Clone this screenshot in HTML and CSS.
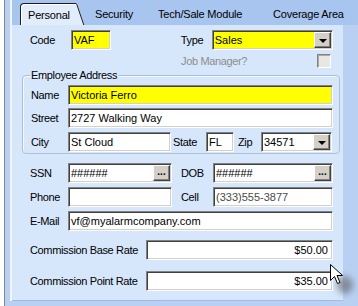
FILE: index.html
```html
<!DOCTYPE html>
<html lang="en">

<head>
    <meta charset="UTF-8">
    <title>Employee - Personal</title>
    <link rel="stylesheet" href="styles.css">
</head>

<body>
    <div class="window">
        <div class="tabctl">
            <div class="tabbar">
                <div class="tab active">Personal</div>
                <svg class="tab-edge" width="9" height="22" viewBox="0 0 9 22">
                    <polygon points="0,0 1,0 8,22 0,22" fill="#e2edfc"/>
                    <line x1="0.5" y1="0.5" x2="7.8" y2="22" stroke="#1c1c1c" stroke-width="1"/>
                </svg>
                <div class="tab security">Security</div>
                <div class="tab tech">Tech/Sale Module</div>
                <div class="tab">Coverage Area</div>
            </div>

            <div class="page">
                <div class="row">
                    <span class="lbl w-code">Code</span>
                    <span class="field yellow w-codebox">VAF</span>
                    <span class="lbl w-type">Type</span>
                    <span class="field yellow combo w-typebox">
                        <span class="value">Sales</span>
                        <span class="btn drop"><span class="arrow"></span></span>
                    </span>
                </div>

                <div class="row job">
                    <span class="lbl disabled">Job Manager?</span>
                    <span class="check"></span>
                </div>

                <fieldset class="group">
                    <legend>Employee Address</legend>
                    <div class="row first">
                        <span class="lbl w-addr">Name</span>
                        <span class="field yellow grow">Victoria Ferro</span>
                    </div>
                    <div class="row street">
                        <span class="lbl w-addr">Street</span>
                        <span class="field grow">2727 Walking Way</span>
                    </div>
                    <div class="row city">
                        <span class="lbl w-addr">City</span>
                        <span class="field w-city">St Cloud</span>
                        <span class="lbl w-state">State</span>
                        <span class="field w-statebox">FL</span>
                        <span class="lbl w-zip">Zip</span>
                        <span class="field combo w-zipbox">
                            <span class="value">34571</span>
                            <span class="btn drop"><span class="arrow"></span></span>
                        </span>
                    </div>
                </fieldset>

                <div class="row ssn">
                    <span class="lbl w-main">SSN</span>
                    <span class="field combo w-ssn">
                        <span class="value">######</span>
                        <span class="btn dots">...</span>
                    </span>
                    <span class="lbl w-side">DOB</span>
                    <span class="field combo grow">
                        <span class="value">######</span>
                        <span class="btn dots">...</span>
                    </span>
                </div>

                <div class="row gap4">
                    <span class="lbl w-main">Phone</span>
                    <span class="field w-ssn"></span>
                    <span class="lbl w-side">Cell</span>
                    <span class="field grow masked">(333)555-3877</span>
                </div>

                <div class="row gap4">
                    <span class="lbl w-main">E-Mail</span>
                    <span class="field grow">vf@myalarmcompany.com</span>
                </div>

                <div class="row rate-base">
                    <span class="lbl w-rate">Commission Base Rate</span>
                    <span class="field grow money">$50.00</span>
                </div>

                <div class="row rate-point">
                    <span class="lbl w-rate">Commission Point Rate</span>
                    <span class="field grow money">$35.00</span>
                </div>
            </div>
        </div>
    </div>

    <!-- mouse pointer with its drop shadow -->
    <div class="cursor">
        <svg width="30" height="36" viewBox="0 0 30 36">
            <defs>
                <filter id="blur" x="-50%" y="-50%" width="200%" height="200%">
                    <feGaussianBlur stdDeviation="3"/>
                </filter>
            </defs>
            <ellipse cx="16" cy="22" rx="8" ry="9" fill="#555" opacity="0.55" filter="url(#blur)"/>
            <path d="M1.5 1.5 L1.5 17.5 L5.5 13.5 L8.5 20.5 L11 19.5 L8 12.5 L13.5 12.5 Z"
                  fill="#fff" stroke="#000" stroke-width="1" stroke-linejoin="miter"/>
        </svg>
    </div>
</body>

</html>
```

FILE: styles.css
```css
body {
    margin: 0;
    width: 358px;
    height: 306px;
    overflow: hidden;
    background: #ffffff;
    font-family: "Liberation Sans", Arial, sans-serif;
    font-size: 11px;
    color: #000;
}

.window {
    margin-left: 4px;
    height: 306px;
    border-left: 1px solid #7d8796;
    background: #b9d0f2;
    padding-left: 5px;
}

.tabctl {
    border-left: 2px solid #eef5fe;
    height: 301px;
    display: flex;
    flex-direction: column;
}

/* tab strip */
.tabbar {
    height: 25px;
    background: #a8c5ef;
    display: flex;
    align-items: flex-end;
    padding-left: 8px;
    white-space: nowrap;
    overflow: hidden;
    flex-shrink: 0;
}

.tab {
    height: 22px;
    line-height: 22px;
    letter-spacing: -0.2px;
    flex-shrink: 0;
}

.tab.active {
    width: 48px;
    padding-left: 7px;
    background: #e2edfc;
    border-left: 1px solid #1c1c1c;
    border-top: 1px solid #1c1c1c;
    border-top-left-radius: 4px;
    box-shadow: inset 1px 1px 0 #ffffff;
    height: 21px;
}

.tab-edge {
    display: block;
    flex-shrink: 0;
}

.security {
    margin-left: 10px;
    width: 63px;
}

.tech {
    width: 115px;
}

/* tab page */
.page {
    width: 303px;
    flex: 1;
    background: #d6e6fb;
    padding: 5px 10px 0 18px;
    border-bottom: 1px solid #9fbbe6;
}

.row {
    display: flex;
    align-items: center;
    height: 20px;
}

.lbl {
    letter-spacing: -0.35px;
    flex-shrink: 0;
    white-space: nowrap;
}

.disabled {
    color: #8d8d8d;
    flex: 1;
}

.w-code { width: 41px; }
.w-codebox { width: 40px; }
.w-type { width: 31px; margin-left: 70px; }
.w-typebox { width: 122px; }
.w-addr { width: 37px; }
.w-city { width: 103px; }
.w-state { width: 33px; margin-left: 2px; }
.w-statebox { width: 28px; }
.w-zip { width: 23px; margin-left: 4px; }
.w-zipbox { width: 71px; }
.w-main { width: 38px; }
.w-ssn { width: 104px; }
.w-side { width: 32px; margin-left: 9px; }
.w-rate { width: 116px; }

.grow { flex: 1; }

/* sunken edit box */
.field {
    box-sizing: border-box;
    height: 20px;
    line-height: 18px;
    padding: 0 2px;
    background: #ffffff;
    border: 1px solid;
    border-color: #828282 #ffffff #ffffff #828282;
    box-shadow: inset 1px 1px 0 #404040, inset -1px -1px 0 #d4d0c8;
    white-space: nowrap;
    overflow: hidden;
}

.yellow { background: #ffff00; }

.masked { color: #4a4a4a; }

.money {
    text-align: right;
    padding-right: 4px;
}

.combo {
    display: flex;
    align-items: center;
    padding-right: 1px;
}

.combo .value {
    flex: 1;
}

/* raised button inside a box */
.btn {
    box-sizing: border-box;
    width: 17px;
    height: 16px;
    background: #d4d0c8;
    border: 1px solid;
    border-color: #ffffff #404040 #404040 #ffffff;
    box-shadow: inset -1px -1px 0 #808080;
    display: flex;
    align-items: center;
    justify-content: center;
}

.dots {
    font-weight: bold;
    font-size: 10px;
    line-height: 10px;
    padding-bottom: 3px;
    letter-spacing: 0;
}

.arrow {
    width: 0;
    height: 0;
    border-left: 4px solid transparent;
    border-right: 4px solid transparent;
    border-top: 4px solid #000;
    margin-top: 1px;
}

.job {
    height: 14px;
    margin-top: 4px;
    padding-left: 151px;
}

.check {
    box-sizing: border-box;
    width: 14px;
    height: 14px;
    margin-right: 2px;
    background: #e9e7e2;
    border: 1px solid;
    border-color: #828282 #ffffff #ffffff #828282;
    box-shadow: inset 1px 1px 0 #aaaaaa;
}

/* group box */
.group {
    margin: 1px -7px 0 -8px;
    padding: 0 6px 1px 8px;
    border: 1px solid #aebfd6;
    border-radius: 4px;
    box-shadow: inset 1px 1px 0 #f3f8ff;
}

.group legend {
    padding: 0 1px;
    margin-left: -1px;
    line-height: 12px;
    letter-spacing: -0.35px;
}

.group .first { margin-top: 4px; }
.group .street { margin-top: 3px; }
.group .city { margin-top: 4px; }

.ssn { margin-top: 9px; }
.gap4 { margin-top: 4px; }
.rate-base { margin-top: 9px; }
.rate-point { margin-top: 11px; }

.cursor {
    position: absolute;
    left: 329px;
    top: 263px;
}
```
